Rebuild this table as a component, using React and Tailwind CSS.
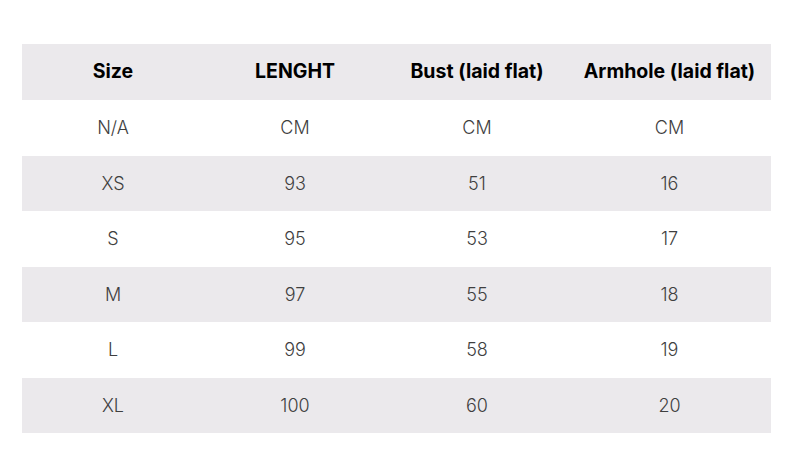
import React from 'react'

// Size chart rows: size, length, bust, armhole
const rows = [
    ['N/A', 'CM', 'CM', 'CM'],
    ['XS', '93', '51', '16'],
    ['S', '95', '53', '17'],
    ['M', '97', '55', '18'],
    ['L', '99', '58', '19'],
    ['XL', '100', '60', '20'],
]

export default function App() {
    return (
        <div className="w-[794px] h-[476px] bg-white pt-[44px] pl-[22px]" style={{ fontFamily: 'Inter, "Noto Sans", sans-serif' }}>
            <table className="w-[749px] border-collapse table-fixed">
                <colgroup>
                    <col className="w-[182px]" />
                    <col className="w-[182px]" />
                    <col className="w-[182px]" />
                    <col />
                </colgroup>
                <thead>
                    <tr className="bg-[#ebe9ec] h-[56px]">
                        <th className="text-[19.5px] font-bold text-black">Size</th>
                        <th className="text-[19.5px] font-bold text-black">LENGHT</th>
                        <th className="text-[19.5px] font-bold text-black">Bust (laid flat)</th>
                        <th className="text-[19.5px] font-bold text-black">Armhole (laid flat)</th>
                    </tr>
                </thead>
                <tbody>
                    {rows.map((row, i) => (
                        <tr key={i} className={i % 2 === 1 ? 'bg-[#ebe9ec] h-[55.5px]' : 'bg-white h-[55.5px]'}>
                            {row.map((cell, j) => (
                                <td key={j} className="text-center text-[18px] font-light text-[#3f3f3f]">
                                    {cell}
                                </td>
                            ))}
                        </tr>
                    ))}
                </tbody>
            </table>
        </div>
    )
}
